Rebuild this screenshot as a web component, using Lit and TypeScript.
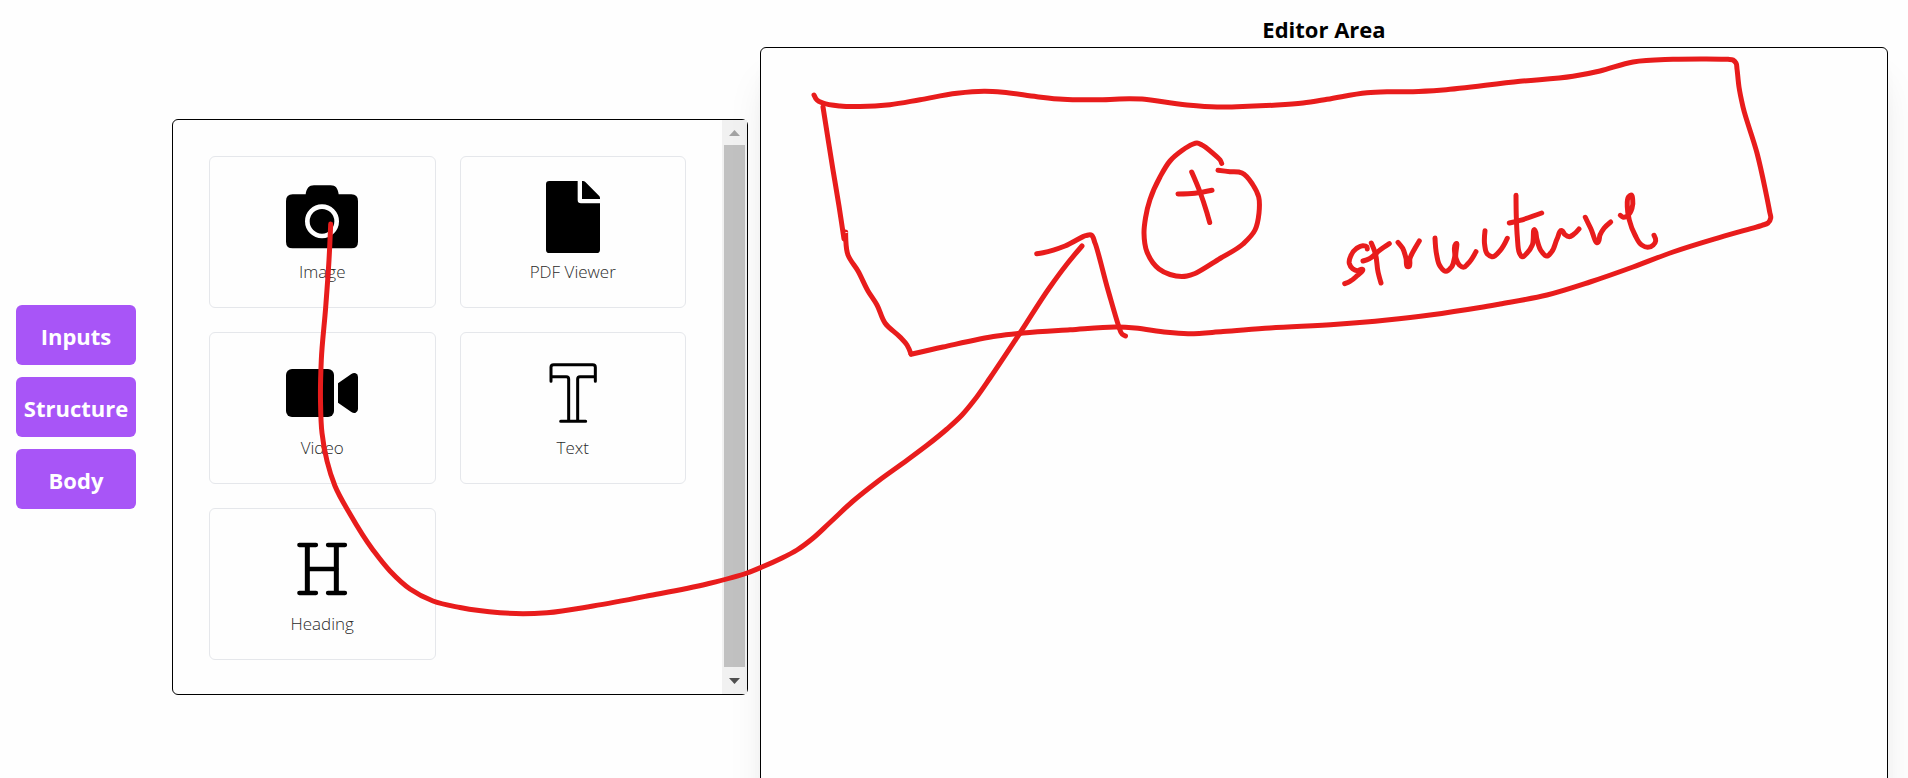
import { LitElement, html, svg, css } from "lit";
import { customElement, property } from "lit/decorators.js";

type Point = [number, number];

/** Turns a list of pen positions into a smooth curve through all of them. */
function smooth(coords: number[], ox = 0, oy = 0, scale = 1): string {
  const pts: Point[] = [];
  for (let i = 0; i < coords.length; i += 2) {
    pts.push([ox + coords[i] / scale, oy + coords[i + 1] / scale]);
  }
  const dist = (a: Point, b: Point) => Math.hypot(b[0] - a[0], b[1] - a[1]);
  const f = (n: number) => n.toFixed(1);
  let d = `M${f(pts[0][0])} ${f(pts[0][1])}`;
  for (let i = 0; i < pts.length - 1; i++) {
    const p1 = pts[i];
    const p2 = pts[i + 1];
    const len = dist(p1, p2);
    // Handle at pts[k]: it follows the segment length, but stays short next to
    // a short neighbour, so that tight corners do not bulge.
    const handle = (k: number): Point => {
      if (k === 0 || k === pts.length - 1) return [0, 0];
      const [a, m, b] = [pts[k - 1], pts[k], pts[k + 1]];
      const la = dist(a, m);
      const lb = dist(m, b);
      const x = ((m[0] - a[0]) * lb) / la + ((b[0] - m[0]) * la) / lb;
      const y = ((m[1] - a[1]) * lb) / la + ((b[1] - m[1]) * la) / lb;
      const size = Math.min(len, 2 * Math.min(la, lb)) / 3 / (Math.hypot(x, y) || 1);
      return [x * size, y * size];
    };
    const t1 = handle(i);
    const t2 = handle(i + 1);
    d += `C${f(p1[0] + t1[0])} ${f(p1[1] + t1[1])} ${f(p2[0] - t2[0])} ${f(p2[1] - t2[1])} ${f(p2[0])} ${f(p2[1])}`;
  }
  return d;
}

const frame = [
  // top and right edge
  smooth([814, 95, 817, 100, 823, 103, 840, 106, 860, 106.5, 890, 104.7, 920, 99.7, 957, 93.3, 985, 91.3, 1003, 92.3, 1037, 96.7, 1063, 99.3, 1100, 99.7, 1130, 98.7, 1142, 99, 1187, 105, 1217, 107, 1237, 106.7, 1277, 105, 1303, 103, 1327, 99.3, 1367, 92.7, 1387, 91.7, 1413, 91.7, 1443, 90, 1520, 81.3, 1573, 76.3, 1600, 71, 1633, 62, 1673, 59.3, 1728, 59.3, 1733, 60, 1736, 63, 1737, 69, 1739, 87, 1743, 107, 1757, 153, 1769.7, 212, 1770.7, 218, 1768, 223, 1762, 225.3, 1720, 237.3, 1673, 252, 1633, 267, 1590, 282, 1547, 295, 1500, 304, 1480, 307.5, 1430, 315, 1387, 320, 1337, 324.3, 1270, 328, 1223, 331.5, 1188, 333.7, 1167, 332.3, 1135, 328, 1117, 327, 1070, 329.7, 1023, 333, 997, 336, 943, 347, 911, 354.3]),
  // left edge
  smooth([911, 354, 907, 345, 900, 337, 885, 323, 877, 305, 868, 291, 858, 271, 848, 255, 845.7, 232]),
  smooth([823, 107, 833, 170, 839, 206, 844, 239]),
];

const arrow = [
  smooth([330.7, 224, 329, 260, 325.7, 307, 321.3, 360, 320.5, 400, 322, 433, 327, 461, 335, 486, 350, 514, 373, 550, 390, 571, 410, 589, 433, 601, 460, 607.5, 500, 612.7, 523, 613.7, 547, 612.7, 593, 606, 647, 596, 707, 584, 747, 573, 762, 567, 782, 558, 797, 550, 812, 539, 830, 522.5, 852, 502, 877, 482, 907, 460.3, 927, 445.3, 947, 429, 962, 415, 976, 398, 990, 378, 1020, 333, 1050, 287, 1067, 264, 1082, 246]),
  smooth([1036.7, 253.7, 1043, 252.7, 1065, 246, 1086, 235.5, 1091, 235, 1095, 243, 1108, 290, 1119, 327, 1122, 334, 1125.5, 336]),
];

const plus = [
  smooth([1221.7, 163.5, 1220.5, 160.5, 1202, 145, 1197, 143, 1192, 144.5, 1170, 161, 1160, 177, 1150, 199.5, 1145.5, 218, 1144, 233, 1147, 252, 1159, 269, 1170, 274.5, 1187, 276, 1195, 273.5, 1220, 258.5, 1243, 244, 1255, 230, 1259, 213, 1258.7, 197, 1253, 185, 1242, 173, 1230, 171.7, 1218, 170.3]),
  smooth([1191.7, 172, 1200, 192, 1207, 213, 1209.7, 222.5]),
  smooth([1178, 194, 1195, 193.3, 1212, 190.3]),
];

const note = [
  smooth([742, 747, 740, 740, 728, 737, 710, 745, 692, 768, 688, 790, 698, 806, 712, 812, 726, 808, 708, 830, 690, 844, 674, 851], 1120, 0, 3),
  smooth([754, 729, 766, 760, 774, 815, 783, 849], 1120, 0, 3),
  smooth([729, 783, 748, 776, 780, 750, 808, 731], 1120, 0, 3),
  smooth([834, 727, 848, 745, 858, 775, 865, 800, 870, 775, 885, 745, 898, 723], 1120, 0, 3),
  smooth([945, 714, 950, 765, 960, 798, 978, 814, 995, 800, 1004, 770, 1007, 732, 1008, 775, 1018, 795, 1030, 802, 1045, 790, 1068, 755], 1120, 0, 3),
  smooth([1095, 692, 1094, 735, 1102, 762, 1116, 770, 1140, 752, 1162, 715], 1120, 0, 3),
  smooth([48, 586, 49, 650, 52, 710, 58, 758, 66, 770, 82, 758, 97, 735, 105, 691, 110, 715, 125, 755, 140, 768, 155, 755, 172, 715, 186, 692, 195, 704, 208, 710, 220, 704, 237, 687], 1500, 0, 3),
  smooth([28, 669, 60, 661, 125, 639], 1500, 0, 3),
  smooth([256, 652, 272, 685, 295, 726, 300, 705, 312, 685, 332, 666], 1500, 0, 3),
  smooth([361, 646, 370, 652, 384, 646, 396, 625, 398, 600, 393, 585, 385, 592, 382, 620, 388, 660, 405, 705, 425, 735, 443, 742, 460, 735, 467, 722, 462, 706], 1500, 0, 3),
];

const icons = {
  camera: svg`
    <path d="M20 40H59C61 23 69 13 84 13H134C149 13 156 23 158 40H196Q216 40 216 60V182Q216 202 196 202H20Q0 202 0 182V60Q0 40 20 40Z"/>
    <circle cx="108" cy="121" r="44" fill="none" stroke="#fefefe" stroke-width="14"/>`,
  file: svg`
    <path d="M37 0H122V57Q122 67 132 67H189V206Q189 216 179 216H37Q27 216 27 206V10Q27 0 37 0Z"/>
    <path d="M135 0H138Q142 0 145 3L186 44Q189 47 189 51V54H135Z"/>`,
  video: svg`
    <rect x="0" y="36" width="144" height="144" rx="18"/>
    <path d="M156 79L196 51Q203 47 209 49Q216 51 216 60V156Q216 164 209 167Q203 169 196 165L156 137Z"/>`,
  text: svg`
    <path fill="none" stroke="#000" stroke-width="9" stroke-linecap="round" stroke-linejoin="round"
      d="M42 73V31Q42 23 50 23H167Q175 23 175 31V73M42 59H88Q95 59 95 66V193M175 59H129Q122 59 122 66V193M71 193H146"/>`,
  heading: svg`
    <g fill="none" stroke="#000" stroke-linecap="round">
      <path stroke-width="13" d="M40 36H90M126 36H177M40 180H90M126 180H177M64 108H151"/>
      <path stroke-width="15" stroke-linecap="butt" d="M64 36V180M151 36V180"/>
    </g>`,
};

type IconName = keyof typeof icons;

@customElement("block-card")
class BlockCard extends LitElement {
  @property() label = "";
  @property() icon: IconName = "file";

  static styles = css`
    :host {
      display: block;
    }
    .card {
      display: flex;
      flex-direction: column;
      align-items: center;
      gap: 8px;
      box-sizing: border-box;
      width: 100%;
      padding: 24px;
      border: 1px solid #e5e7eb;
      border-radius: 6px;
      background: transparent;
      color: #2b2b2b;
      font: 300 17px/22px "Open Sans", "Noto Sans", sans-serif;
      cursor: grab;
    }
    .icon {
      display: block;
      width: 72px;
      height: 72px;
    }
  `;

  render() {
    return html`
      <button class="card" type="button" draggable="true">
        <svg class="icon" viewBox="0 0 216 216" fill="#000" aria-hidden="true">${icons[this.icon]}</svg>
        <span>${this.label}</span>
      </button>
    `;
  }
}

@customElement("app-root")
class AppRoot extends LitElement {
  static styles = css`
    :host {
      display: block;
      position: relative;
      height: 100vh;
      overflow: hidden;
      background: #fefefe;
      color: #000;
      font-family: "Open Sans", "Noto Sans", sans-serif;
    }
    .page {
      display: flex;
      align-items: center;
      gap: 12px;
      padding: 13px 20px 0 16px;
    }
    .tabs {
      display: flex;
      flex-direction: column;
      gap: 12px;
      width: 120px;
      margin-right: 24px;
    }
    .tab {
      height: 60px;
      padding: 1px 0 0;
      border: 0;
      border-radius: 6px;
      background: #a855f7;
      color: #fff;
      font: 700 22px/32px "Open Sans", "Noto Sans", sans-serif;
      cursor: pointer;
    }
    .panel {
      display: flex;
      box-sizing: border-box;
      flex: 0 0 576px;
      height: 576px;
      border: 1px solid #000;
      border-radius: 6px;
    }
    .blocks {
      flex: 1;
      display: grid;
      grid-template-columns: 1fr 1fr;
      align-content: start;
      gap: 24px;
      padding: 36px;
    }
    .scrollbar {
      display: flex;
      flex-direction: column;
      width: 25px;
      background: #f1f1f1;
    }
    .arrow {
      display: block;
      width: 25px;
      height: 25px;
    }
    .thumb {
      flex: 1;
      margin: 0 2px 2px;
      background: #c1c1c1;
    }
    .editor {
      flex: 1;
      min-width: 0;
    }
    .title {
      margin: 0;
      padding-bottom: 2px;
      text-align: center;
      font-size: 22px;
      line-height: 32px;
      font-weight: 700;
    }
    .canvas {
      box-sizing: border-box;
      min-height: 754px;
      border: 1px solid #000;
      border-radius: 6px;
      box-shadow: 0 30px 38px -8px rgb(0 0 0 / 0.1), 0 12px 15px -9px rgb(0 0 0 / 0.1);
    }
    .ink {
      position: absolute;
      top: 0;
      left: 0;
      width: 1908px;
      height: 778px;
      pointer-events: none;
      fill: none;
      stroke: #e81c1c;
      stroke-width: 5px;
      stroke-linecap: round;
      stroke-linejoin: round;
    }
  `;

  private tabs = ["Inputs", "Structure", "Body"];

  private blocks: { label: string; icon: IconName }[] = [
    { label: "Image", icon: "camera" },
    { label: "PDF Viewer", icon: "file" },
    { label: "Video", icon: "video" },
    { label: "Text", icon: "text" },
    { label: "Heading", icon: "heading" },
  ];

  render() {
    return html`
      <main class="page">
        <nav class="tabs">
          ${this.tabs.map((t) => html`<button class="tab" type="button">${t}</button>`)}
        </nav>
        <section class="panel">
          <div class="blocks">
            ${this.blocks.map(
              (b) => html`<block-card .label=${b.label} .icon=${b.icon}></block-card>`
            )}
          </div>
          <div class="scrollbar" aria-hidden="true">
            <svg class="arrow" viewBox="0 0 25 25"><path fill="#a3a3a3" d="M12.5 10L18 16H7Z" /></svg>
            <div class="thumb"></div>
            <svg class="arrow" viewBox="0 0 25 25"><path fill="#505050" d="M7 9H18L12.5 15Z" /></svg>
          </div>
        </section>
        <section class="editor">
          <h1 class="title">Editor Area</h1>
          <div class="canvas"></div>
        </section>
      </main>
      <svg class="ink" viewBox="0 0 1908 778" aria-hidden="true">
        ${[...frame, ...arrow, ...plus, ...note].map((d) => svg`<path d=${d} />`)}
      </svg>
    `;
  }
}
